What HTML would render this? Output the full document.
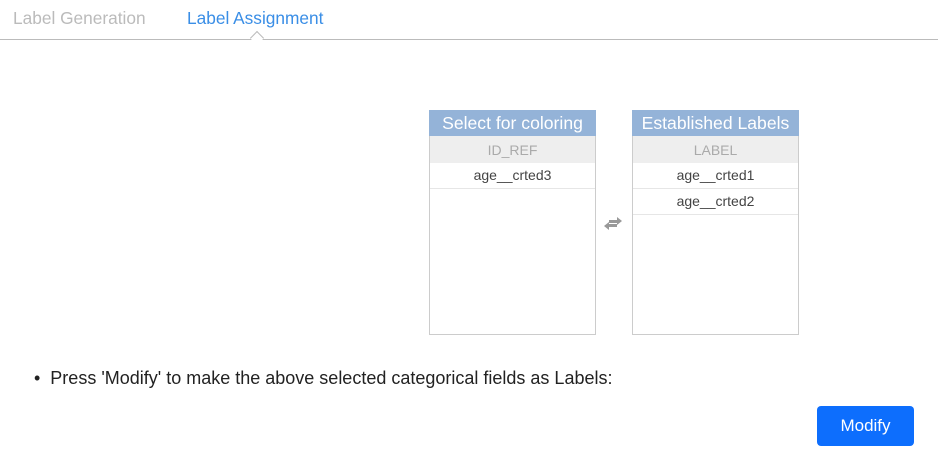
<!DOCTYPE html>
<html><head><style>
body{margin:0;width:938px;height:466px;background:#fff;font-family:"Liberation Sans",sans-serif;position:relative;overflow:hidden}
.tab{position:absolute;top:8px;font-size:17.3px}
.line{position:absolute;left:0;top:39px;width:938px;height:1px;background:#bbb}
.caret{position:absolute;left:252px;top:33px;width:9px;height:9px;background:#fff;border-left:1px solid #bbb;border-top:1px solid #bbb;transform:rotate(45deg)}
.box{position:absolute;top:110px;width:167px;height:225px}
.hd{height:26px;background:#94b3d8;color:#fff;font-size:17.6px;text-align:center;line-height:26px;white-space:nowrap}
.body{border:1px solid #ccc;border-top:none;height:198px;box-sizing:content-box}
.sub{height:27px;background:#eee;color:#aaa;font-size:14px;text-align:center;line-height:28px}
.row{height:25px;border-bottom:1px solid #e6e6e6;color:#444;font-size:14px;text-align:center;line-height:25px}
.btn{position:absolute;left:817px;top:406px;width:97px;height:40px;background:#0d6efd;color:#fff;border-radius:4px;font-size:17px;text-align:center;line-height:40px}
</style></head><body>
<div class="tab" style="left:13px;color:#bbb">Label Generation</div>
<div class="tab" style="left:187px;color:#3a8ee6">Label Assignment</div>
<div class="line"></div><div class="caret"></div>
<div class="box" style="left:429px"><div class="hd">Select for coloring</div><div class="body"><div class="sub">ID_REF</div><div class="row">age__crted3</div></div></div>
<div class="box" style="left:632px"><div class="hd">Established Labels</div><div class="body"><div class="sub">LABEL</div><div class="row">age__crted1</div><div class="row">age__crted2</div></div></div>
<svg style="position:absolute;left:603px;top:216px" width="20" height="15" viewBox="0 0 20 15"><path d="M6 4h8V1l5 4-5 4V7H6z M14 8H6V6L1 10l5 4v-3h8z" fill="#999"/></svg>
<div style="position:absolute;left:34px;top:368px;font-size:18px;color:#222">•&nbsp;&nbsp;Press 'Modify' to make the above selected categorical fields as Labels:</div>
<div class="btn">Modify</div>
</body></html>
